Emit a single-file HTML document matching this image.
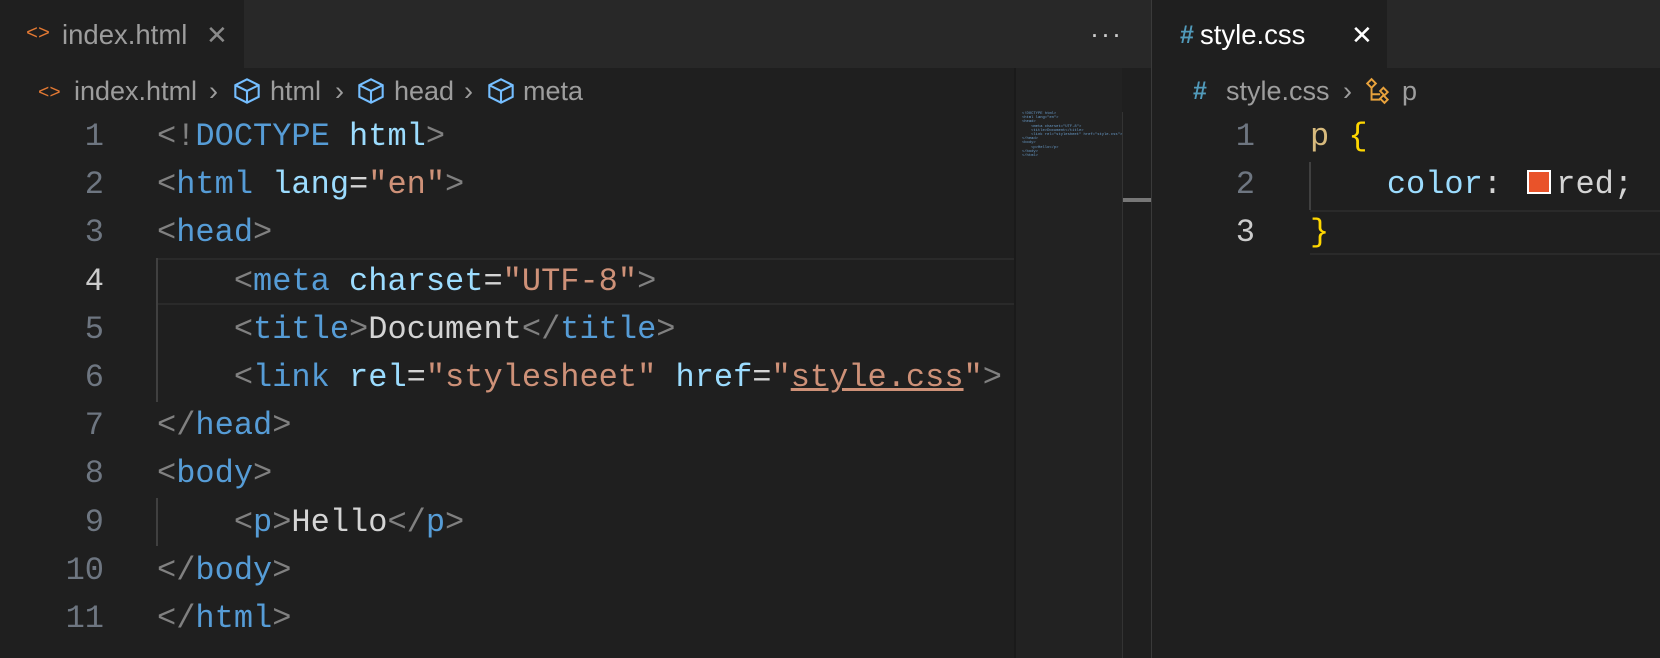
<!DOCTYPE html>
<html><head><style>
*{margin:0;padding:0;box-sizing:border-box}
body{width:1660px;height:658px;background:#1f1f1f;overflow:hidden;position:relative;font-family:"Liberation Sans",sans-serif}
.abs{position:absolute}
.code{font-family:"Liberation Mono",monospace;font-size:32px;white-space:pre;line-height:48px;color:#d4d4d4}
.ln{position:absolute;width:60px;text-align:right;color:#6e7681;font-family:"Liberation Mono",monospace;font-size:32px;line-height:48px}
.p{color:#808080}.t{color:#569cd6}.a{color:#9cdcfe}.s{color:#ce9178}.w{color:#d4d4d4}
.ui{font-size:27px;color:#9d9d9d;line-height:32px}
</style></head><body>
<div class="abs" style="left:0;top:0;width:1660px;height:68px;background:#282828"></div>
<div class="abs" style="left:0;top:0;width:244px;height:68px;background:#1f1f1f"></div>
<div class="abs" style="left:1151px;top:0;width:236px;height:68px;background:#1f1f1f"></div>
<div class="abs" style="left:1151px;top:0;width:1px;height:658px;background:#3a3a3a"></div>

<!-- left tab -->
<div class="abs ui" style="left:26px;top:19px;color:#e37933;font-family:'Liberation Mono';font-size:20px">&lt;&gt;</div>
<div class="abs ui" style="left:62px;top:19px;font-size:27.5px">index.html</div>
<div class="abs ui" style="left:206px;top:19px;font-size:26px;color:#8a8a8a">✕</div>
<div class="abs ui" style="left:1090px;top:18px;color:#ccc;letter-spacing:2px">···</div>

<!-- left breadcrumb -->
<div class="abs ui" style="left:38px;top:77px;color:#e37933;font-family:'Liberation Mono';font-size:19px">&lt;&gt;</div>
<div class="abs ui" style="left:74px;top:75px">index.html</div>
<div class="abs ui" style="left:209px;top:75px">›</div>
<svg class="abs" style="left:233px;top:77px" width="28" height="28" viewBox="0 0 24 24" fill="none" stroke="#75beff" stroke-width="1.8"><path d="M12 2 22 7v10l-10 5-10-5V7z M2 7l10 5 10-5 M12 12v10"/></svg>
<div class="abs ui" style="left:270px;top:75px">html</div>
<div class="abs ui" style="left:335px;top:75px">›</div>
<svg class="abs" style="left:357px;top:77px" width="28" height="28" viewBox="0 0 24 24" fill="none" stroke="#75beff" stroke-width="1.8"><path d="M12 2 22 7v10l-10 5-10-5V7z M2 7l10 5 10-5 M12 12v10"/></svg>
<div class="abs ui" style="left:394px;top:75px">head</div>
<div class="abs ui" style="left:464px;top:75px">›</div>
<svg class="abs" style="left:487px;top:77px" width="28" height="28" viewBox="0 0 24 24" fill="none" stroke="#75beff" stroke-width="1.8"><path d="M12 2 22 7v10l-10 5-10-5V7z M2 7l10 5 10-5 M12 12v10"/></svg>
<div class="abs ui" style="left:523px;top:75px">meta</div>

<!-- current line highlight -->
<div class="abs" style="left:157px;top:258px;width:857px;height:47px;border:2px solid #2a2a2a;border-left:none;border-right:none"></div>
<div class="abs" style="left:156px;top:258px;width:2px;height:144px;background:#404040"></div>
<div class="abs" style="left:156px;top:498px;width:2px;height:48px;background:#404040"></div>

<div class="ln" style="left:44px;top:113px;line-height:48.2px">1<br>2<br>3<br><span style="color:#ccc">4</span><br>5<br>6<br>7<br>8<br>9<br>10<br>11</div>
<div class="abs code" style="left:157px;top:113px;line-height:48.2px"><span class="p">&lt;!</span><span class="t">DOCTYPE</span> <span class="a">html</span><span class="p">&gt;</span>
<span class="p">&lt;</span><span class="t">html</span> <span class="a">lang</span><span class="w">=</span><span class="s">"en"</span><span class="p">&gt;</span>
<span class="p">&lt;</span><span class="t">head</span><span class="p">&gt;</span>
    <span class="p">&lt;</span><span class="t">meta</span> <span class="a">charset</span><span class="w">=</span><span class="s">"UTF-8"</span><span class="p">&gt;</span>
    <span class="p">&lt;</span><span class="t">title</span><span class="p">&gt;</span>Document<span class="p">&lt;/</span><span class="t">title</span><span class="p">&gt;</span>
    <span class="p">&lt;</span><span class="t">link</span> <span class="a">rel</span><span class="w">=</span><span class="s">"stylesheet"</span> <span class="a">href</span><span class="w">=</span><span class="s">"<u>style.css</u>"</span><span class="p">&gt;</span>
<span class="p">&lt;/</span><span class="t">head</span><span class="p">&gt;</span>
<span class="p">&lt;</span><span class="t">body</span><span class="p">&gt;</span>
    <span class="p">&lt;</span><span class="t">p</span><span class="p">&gt;</span>Hello<span class="p">&lt;/</span><span class="t">p</span><span class="p">&gt;</span>
<span class="p">&lt;/</span><span class="t">body</span><span class="p">&gt;</span>
<span class="p">&lt;/</span><span class="t">html</span><span class="p">&gt;</span></div>

<!-- minimap -->
<div class="abs" style="left:1014px;top:68px;width:2px;height:590px;background:#1a1a1a"></div>
<div class="abs" style="left:1016px;top:68px;width:106px;height:590px;background:#222"></div>
<div class="abs" style="left:1122px;top:112px;width:1px;height:546px;background:#333"></div>
<div class="abs" style="left:1123px;top:198px;width:28px;height:4px;background:#777"></div>
<div class="abs" style="left:1022px;top:112px;font-family:'Liberation Mono';font-size:3.8px;line-height:4.2px;white-space:pre;color:#6a9fcf">&lt;!DOCTYPE html&gt;
&lt;html lang="en"&gt;
&lt;head&gt;
    &lt;meta charset="UTF-8"&gt;
    &lt;title&gt;Document&lt;/title&gt;
    &lt;link rel="stylesheet" href="style.css"&gt;
&lt;/head&gt;
&lt;body&gt;
    &lt;p&gt;Hello&lt;/p&gt;
&lt;/body&gt;
&lt;/html&gt;</div>

<!-- right tab -->
<div class="abs ui" style="left:1180px;top:19px;color:#519aba;font-weight:bold;font-size:25px">#</div>
<div class="abs ui" style="left:1200px;top:19px;color:#fff;font-size:27.5px">style.css</div>
<div class="abs ui" style="left:1351px;top:19px;color:#fff;font-size:26px">✕</div>

<!-- right breadcrumb -->
<div class="abs ui" style="left:1193px;top:75px;color:#519aba;font-weight:bold;font-size:25px">#</div>
<div class="abs ui" style="left:1226px;top:75px">style.css</div>
<div class="abs ui" style="left:1343px;top:75px">›</div>
<svg class="abs" style="left:1365px;top:77px" width="26" height="28" viewBox="0 0 24 26" fill="none" stroke="#e8a23c" stroke-width="1.8"><path d="M2 6l4-4 4 4-4 4z M6 10v6h8 M14 13l3-3 4 4-3 3z M14 20l3-3 4 4-3 3z M6 16v5h8"/></svg>
<div class="abs ui" style="left:1402px;top:75px">p</div>

<div class="abs" style="left:1310px;top:210px;width:350px;height:45px;border:2px solid #2a2a2a;border-left:none;border-right:none"></div>
<div class="abs" style="left:1309px;top:162px;width:2px;height:48px;background:#404040"></div>
<div class="ln" style="left:1195px;top:113px;line-height:48.2px">1<br>2<br><span style="color:#ccc">3</span></div>
<div class="abs code" style="left:1310px;top:113px;line-height:48.2px"><span style="color:#d7ba7d">p</span> <span style="color:#ffd700">{</span>
    <span class="a">color</span>: <span style="display:inline-block;width:24px;height:24px;background:#e9532a;border:2px solid #fff;vertical-align:-1px;margin-left:6px;margin-right:5px"></span>red;
<span style="color:#ffd700">}</span></div>
</body></html>
